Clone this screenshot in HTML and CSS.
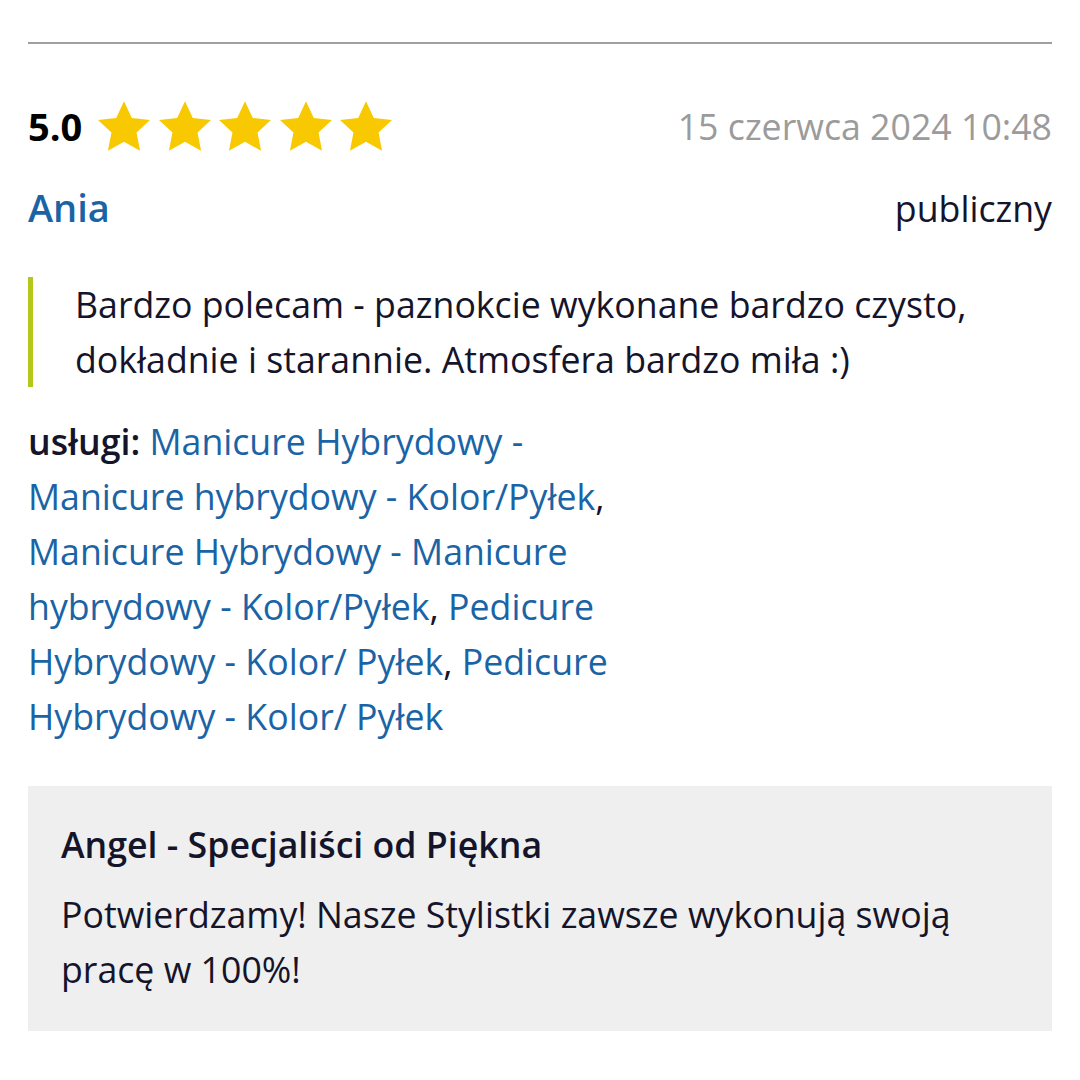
FILE: index.html
```html
<!DOCTYPE html>
<html lang="pl">
<head>
<meta charset="utf-8">
<link rel="stylesheet" href="styles.css">
</head>
<body>
<div class="review">
  <div class="header">
    <div class="rating">
      <span class="score">5.0</span>
      <span class="stars">
        <svg class="star" viewBox="1 1.2 22 21"><path d="M12 1.2l3.3 7.1 7.7.9-5.7 5.3 1.5 7.7L12 18.4l-6.8 3.8 1.5-7.7L1 9.2l7.7-.9z"/></svg>
        <svg class="star" viewBox="1 1.2 22 21"><path d="M12 1.2l3.3 7.1 7.7.9-5.7 5.3 1.5 7.7L12 18.4l-6.8 3.8 1.5-7.7L1 9.2l7.7-.9z"/></svg>
        <svg class="star" viewBox="1 1.2 22 21"><path d="M12 1.2l3.3 7.1 7.7.9-5.7 5.3 1.5 7.7L12 18.4l-6.8 3.8 1.5-7.7L1 9.2l7.7-.9z"/></svg>
        <svg class="star" viewBox="1 1.2 22 21"><path d="M12 1.2l3.3 7.1 7.7.9-5.7 5.3 1.5 7.7L12 18.4l-6.8 3.8 1.5-7.7L1 9.2l7.7-.9z"/></svg>
        <svg class="star" viewBox="1 1.2 22 21"><path d="M12 1.2l3.3 7.1 7.7.9-5.7 5.3 1.5 7.7L12 18.4l-6.8 3.8 1.5-7.7L1 9.2l7.7-.9z"/></svg>
      </span>
    </div>
    <div class="date">15 czerwca 2024 10:48</div>
  </div>
  <div class="author-row">
    <a class="author">Ania</a>
    <span class="visibility">publiczny</span>
  </div>
  <blockquote class="quote">Bardzo polecam - paznokcie wykonane bardzo czysto, dokładnie i starannie. Atmosfera bardzo miła :)</blockquote>
  <p class="services"><b>usługi:</b> <a class="link">Manicure Hybrydowy - Manicure hybrydowy - Kolor/Pyłek</a>, <a class="link">Manicure Hybrydowy - Manicure hybrydowy - Kolor/Pyłek</a>, <a class="link">Pedicure Hybrydowy - Kolor/ Pyłek</a>, <a class="link">Pedicure Hybrydowy - Kolor/ Pyłek</a></p>
  <div class="reply">
    <div class="reply-title">Angel - Specjaliści od Piękna</div>
    <p class="reply-text">Potwierdzamy! Nasze Stylistki zawsze wykonują swoją pracę w 100%!</p>
  </div>
</div>
</body>
</html>
```

FILE: styles.css
```css
html, body {
  margin: 0;
  padding: 0;
  background: #fff;
}
body {
  font-family: "Open Sans", sans-serif;
  color: #14142b;
  font-size: 35.7px;
  line-height: 55px;
}
.review {
  margin: 42px 28px 0;
  border-top: 2px solid #a0a0a0;
  padding-top: 51px;
}
.header {
  display: flex;
  justify-content: space-between;
  align-items: center;
  height: 62px;
}
.rating {
  display: flex;
  align-items: center;
}
.score {
  font-weight: 700;
  font-size: 38px;
  color: #000;
  margin-right: 16px;
}
.stars {
  display: flex;
  gap: 8.5px;
}
.star {
  width: 52px;
  height: 50px;
  fill: #f8c800;
  display: block;
}
.date {
  color: #9b9b9b;
}
.author-row {
  display: flex;
  justify-content: space-between;
  align-items: baseline;
  margin-top: 23px;
}
.author {
  font-size: 38px;
  font-weight: 600;
  color: #1a64a6;
}
.visibility {
  color: #14142b;
}
.quote {
  margin: 41px 0 0;
  border-left: 5px solid #b3c81a;
  padding: 0 0 0 42px;
}
.services {
  margin: 27px 0 0;
  width: 640px;
}
.services b {
  font-weight: 600;
}
.link {
  color: #1a64a6;
}
.reply {
  margin-top: 42px;
  background: #efefef;
  padding: 31px 33px 34px;
}
.reply-title {
  font-weight: 600;
}
.reply-text {
  margin: 15px 0 0;
}
```
